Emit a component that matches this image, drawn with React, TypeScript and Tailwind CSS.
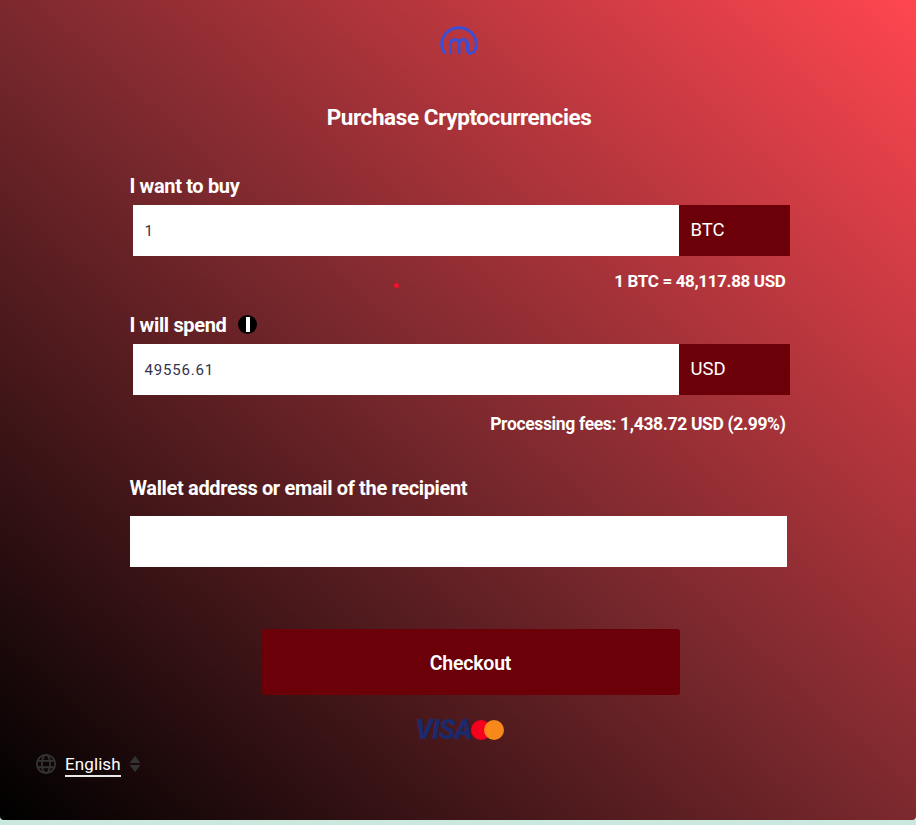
import React from "react";

const font = { fontFamily: '"Roboto", "Liberation Sans", sans-serif' };

function Logo() {
  return (
    <svg width="38" height="30" viewBox="0 0 38 30" fill="none" stroke="#3b4fd6" strokeWidth="3">
      <path d="M5.5 27.5 C2.5 24.5 1.7 21.5 1.7 18.5 C1.7 9 9.5 1.7 19 1.7 C28.5 1.7 36.3 9 36.3 18.5 C36.3 21.5 35.5 24.5 32.5 27.5" />
      <path d="M10.5 28 V18.5 C10.5 15 12.5 13.5 15 13.5 C17.5 13.5 19 15 19 18.5 V28 M19 18.5 C19 15 20.5 13.5 23 13.5 C25.5 13.5 27.5 15 27.5 18.5 V24 C27.5 26.5 28.5 27.5 31.5 27.5" />
    </svg>
  );
}

function AmountRow({ value, unit }: { value: string; unit: string }) {
  return (
    <div className="flex h-[51px] ml-[3px] w-[657px]">
      <div className="w-[546px] h-full bg-white flex items-center pl-[12px] pt-[2px] text-[15px] tracking-[0.8px] text-[#33334d]">{value}</div>
      <div className="w-[111px] h-full bg-[#6b0009] flex items-center pl-[12px] pt-[1px] text-[18.5px] text-white">{unit}</div>
    </div>
  );
}

export default function App() {
  return (
    <div className="w-[916px] h-[825px] bg-[#cbe8de] overflow-hidden" style={font}>
      <div className="relative w-[916px] h-[820px] rounded-b-[4px] bg-[linear-gradient(to_top_right,#000000_0%,#7c292e_50%,#ff4650_100%)] flex flex-col items-center">
        <div className="mt-[26px] h-[30px] ml-[2px]"><Logo /></div>
        <h1 className="mt-[46px] h-[30px] leading-[30px] text-[22.5px] font-bold text-white tracking-[-0.4px] ml-[2px]">Purchase Cryptocurrencies</h1>

        <div className="mt-[42px] w-[657px] flex flex-col text-white">
          <div className="h-[31px] text-[20px] font-bold leading-[24px] tracking-[-0.35px]">I want to buy</div>
          <AmountRow value="1" unit="BTC" />
          <div className="mt-[15px] h-[19px] leading-[20px] text-right text-[17px] font-bold tracking-[-0.35px] pr-[1px]">1 BTC = 48,117.88 USD</div>

          <div className="mt-[24px] h-[30px] flex items-start gap-[12px] text-[20px] font-bold leading-[22px] tracking-[-0.35px]">
            <span>I will spend</span>
            <span className="mt-[1px] w-[19px] h-[19px] rounded-full bg-black flex flex-col items-center justify-center">
              <span className="w-[4px] h-[15px] bg-white" />
            </span>
          </div>
          <AmountRow value="49556.61" unit="USD" />
          <div className="mt-[19px] h-[19px] leading-[20px] text-right text-[17.5px] font-bold tracking-[-0.35px] pr-[1px]">Processing fees: 1,438.72 USD (2.99%)</div>

          <div className="mt-[44px] h-[39px] text-[20px] font-bold leading-[22px] tracking-[-0.35px]">Wallet address or email of the recipient</div>
          <div className="h-[51px] bg-white" />

          <button className="mt-[62px] ml-[132px] w-[418px] h-[66px] pt-[3px] rounded-[3px] bg-[#6b0009] text-[19.5px] font-semibold text-white tracking-[-0.2px]">Checkout</button>

          <div className="mt-[22px] ml-[286px] h-[26px] flex items-center">
            <span className="text-[27px] font-black italic leading-none text-[#1a2a6c] tracking-[-0.9px] w-[55px]">VISA</span>
            <span className="w-[20px] h-[20px] rounded-full bg-[#f5001f]" />
            <span className="w-[20px] h-[20px] rounded-full bg-[#ff8f1a] ml-[-7px] opacity-95" />
          </div>
        </div>

        <span className="absolute left-[394px] top-[283px] w-[5px] h-[5px] rounded-full bg-[#f01030]" />

        <div className="absolute left-[35px] top-[751px] flex items-center">
          <svg width="22" height="22" viewBox="0 0 24 24" fill="none" stroke="#333333" strokeWidth="2">
            <circle cx="12" cy="12" r="10" />
            <ellipse cx="12" cy="12" rx="4.5" ry="10" />
            <path d="M2.5 8.5h19M2.5 15.5h19" />
          </svg>
          <span className="ml-[8px] text-[17px] leading-[21px] text-white border-b-2 border-[#e8e8e8] tracking-[0.1px] mt-[3px]">English</span>
          <svg className="ml-[8px]" width="12" height="18" viewBox="0 0 12 18" fill="#333333">
            <path d="M6 1 L11.5 8 H0.5 Z M6 17 L11.5 10 H0.5 Z" />
          </svg>
        </div>
      </div>
    </div>
  );
}
